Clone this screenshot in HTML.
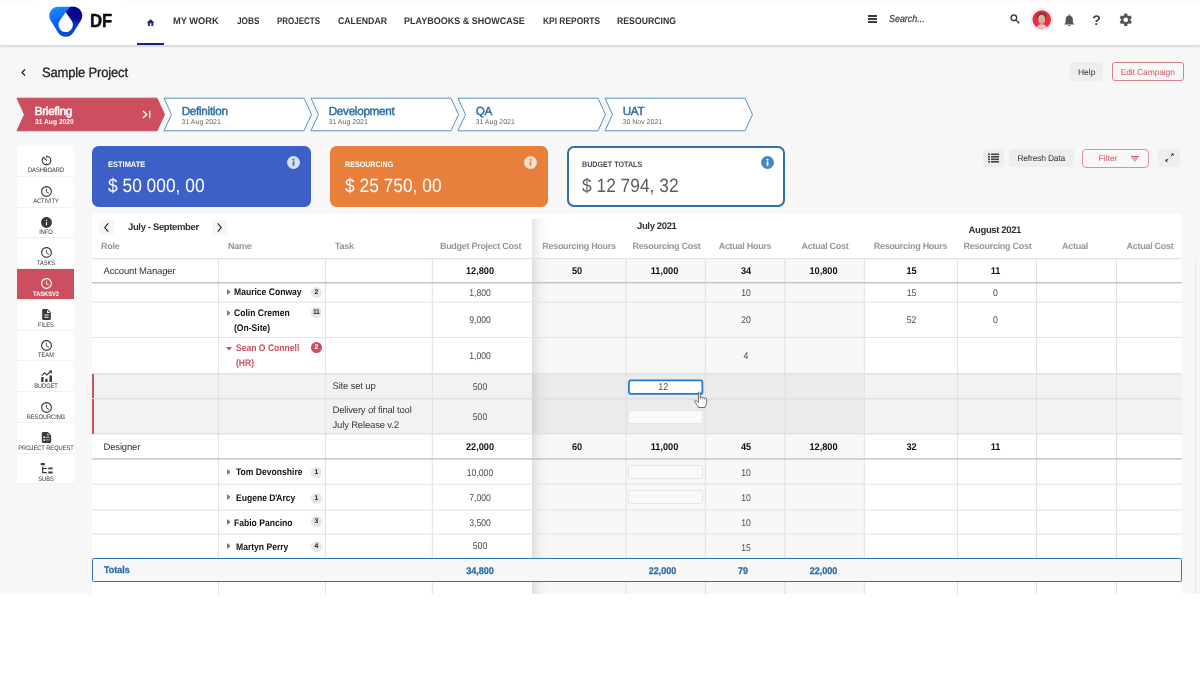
<!DOCTYPE html>
<html>
<head>
<meta charset="utf-8">
<title>Sample Project</title>
<style>
*{box-sizing:border-box;margin:0;padding:0}
html,body{width:1200px;height:697px;overflow:hidden;background:#fff;font-family:"Liberation Sans",sans-serif;color:#222;text-rendering:geometricPrecision}
.abs{position:absolute}
#page{position:absolute;left:0;top:0;width:1200px;height:594px;background:#f7f7f7;overflow:hidden;will-change:transform}
/* nav */
#nav{position:absolute;left:0;top:0;width:1200px;height:45px;background:#fff;box-shadow:0 1px 3px rgba(0,0,0,.2)}
.nv{position:absolute;top:15.900px;font-size:9.5px;font-weight:bold;letter-spacing:0;color:#333;white-space:nowrap;line-height:11px;transform-origin:0 50%}
/* title */
.btn{position:absolute;height:18px;border-radius:3px;font-size:8.500px;line-height:18px;text-align:center;color:#333;background:#eee;white-space:nowrap}
.btn.red{background:transparent;border:1.300px solid #db7f8a;color:#d05a69;line-height:16px}
/* stages */
.stage{position:absolute;top:97px;height:35px;width:149px}
.stage .t{position:absolute;left:18.700px;top:8.200px;font-size:11.700px;letter-spacing:-.28px;color:#2e6da4;line-height:13px;-webkit-text-stroke:.45px #2e6da4}
.stage .d{position:absolute;left:18.500px;top:22.100px;font-size:7px;color:#666;line-height:8px}
/* sidebar */
.sb{position:absolute;left:17px;width:57px;height:30.780px;background:#fff;border-bottom:1px solid #f1f1f1}
.sb span{position:absolute;left:-11.500px;width:80px;text-align:center;top:22px;font-size:6.500px;color:#333;line-height:7px;transform:scaleX(.875)}
.sb svg{position:absolute;left:23px;top:8.500px;width:13px;height:13px}
.sb.on{background:#cc4f5f}
.sb.on span{color:#fff;font-weight:bold}
/* cards */
.card{position:absolute;top:146px;height:60.500px;width:219px;border-radius:6.500px;color:#fff}
.card .l{position:absolute;left:16px;top:13.600px;font-size:8px;line-height:9px;font-weight:bold;letter-spacing:0;transform:scaleX(.935);transform-origin:0 50%;white-space:nowrap}
.card .v{position:absolute;left:15.500px;top:29.700px;font-size:19.200px;line-height:22px;letter-spacing:0;transform:scaleX(.905);transform-origin:0 50%;white-space:nowrap}
.card svg{position:absolute;right:11px;top:10px;width:13px;height:13px}
/* table */
#tbl{position:absolute;left:92px;top:214px;width:1090px;height:380px;background:#fff;border-radius:3px 3px 0 0;overflow:hidden}
.mt{font-size:9.5px;font-weight:bold;letter-spacing:-.36px;color:#303030;line-height:12px;white-space:nowrap}
.hd{font-size:9px;font-weight:bold;letter-spacing:-.28px;color:#969696;line-height:12px;white-space:nowrap}
.rg{font-size:9.5px;letter-spacing:-.17px;color:#333;line-height:12px;white-space:nowrap}
.nm{font-size:9.600px;font-weight:bold;letter-spacing:0;line-height:12px;white-space:nowrap;transform:scaleX(.893);transform-origin:0 50%}
.nb{font-size:9.700px;font-weight:bold;letter-spacing:0;color:#111;line-height:12px;white-space:nowrap;transform:scaleX(.95)}
.nr{font-size:9.700px;letter-spacing:0;color:#4a4a4a;line-height:12px;white-space:nowrap;transform:scaleX(.89)}
.tt{font-size:9.700px;font-weight:bold;letter-spacing:0;color:#2b69a6;line-height:12px;white-space:nowrap;transform:scaleX(.93);-webkit-text-stroke:.25px #2b69a6}
.bdg{width:11px;height:11px;border-radius:50%;font-size:6.800px;font-weight:bold;line-height:12.200px;text-align:center;letter-spacing:-.3px}
</style>
</head>
<body>
<div id="page">

<!-- NAV -->
<div id="nav">
  <div class="abs" style="left:0;top:0;width:38px;height:1px;background:#f7f9fb"></div><div class="abs" style="left:122px;top:0;width:1078px;height:1px;background:#f7f9fb"></div>
  <svg class="abs" style="left:48px;top:4px" width="36" height="36" viewBox="0 0 36 36">
    <defs>
      <linearGradient id="lg1" x1="0.15" y1="0" x2="0.55" y2="1"><stop offset="0" stop-color="#1f8fff"/><stop offset="0.45" stop-color="#0b63fb"/><stop offset="1" stop-color="#0a45d0"/></linearGradient>
      <linearGradient id="lg2" x1="0" y1="0" x2="0" y2="1"><stop offset="0" stop-color="#05058a"/><stop offset="0.45" stop-color="#07078f"/><stop offset="1" stop-color="#0a2ab8" stop-opacity="0"/></linearGradient>
    </defs>
    <path d="M10.300 2.700 H25.100 A9 9 0 0 1 32.780 16.400 L25.380 28.500 A9 9 0 0 1 10.020 28.500 L2.620 16.400 A9 9 0 0 1 10.300 2.700 Z" fill="url(#lg1)"/>
    <path d="M17.700 8.300 L21.800 3.200 Q22.300 2.700 23.300 2.700 H25.100 A9 9 0 0 1 32.780 16.400 L25.380 28.500 L17.700 28.500 Z" fill="url(#lg2)"/>
    <path d="M17.700 8.300 L23.500 16.600 A7.200 7.200 0 1 1 11.900 16.600 Z" fill="#fff"/>
  </svg>
  <div class="abs" style="left:90px;top:11.200px;font-size:19px;font-weight:bold;line-height:22px;color:#0b0b12;transform:scaleX(.88);transform-origin:0 50%;-webkit-text-stroke:.4px #0b0b12">DF</div>
  <svg class="abs" style="left:146px;top:17.500px" width="9.200" height="9.200" viewBox="0 0 24 24"><path d="M10 21v-7h4v7h5v-9h3L12 3 2 12h3v9z" fill="#1a237e"/></svg>
  <div class="abs" style="left:137px;top:43px;width:27px;height:2px;background:#1a237e"></div>
  <div class="nv" style="left:173px;transform:scaleX(0.978)">MY WORK</div>
  <div class="nv" style="left:237px;transform:scaleX(0.869)">JOBS</div>
  <div class="nv" style="left:277px;transform:scaleX(0.840)">PROJECTS</div>
  <div class="nv" style="left:337.5px;transform:scaleX(0.919)">CALENDAR</div>
  <div class="nv" style="left:404.25px;transform:scaleX(0.948)">PLAYBOOKS &amp; SHOWCASE</div>
  <div class="nv" style="left:542.5px;transform:scaleX(0.885)">KPI REPORTS</div>
  <div class="nv" style="left:617px;transform:scaleX(0.916)">RESOURCING</div>
  <!-- hamburger -->
  <div class="abs" style="left:868px;top:15px;width:8.500px;height:1.600px;background:#3c3c3c;box-shadow:0 3px 0 #3c3c3c,0 6px 0 #3c3c3c"></div>
  <div class="abs" style="left:888.500px;top:13.600px;font-size:10px;font-style:italic;color:#444;line-height:12px;transform:scaleX(.89);transform-origin:0 50%;-webkit-text-stroke:.25px #444">Search...</div>
  <svg class="abs" style="left:1009px;top:13.200px" width="12.300" height="12.300" viewBox="0 0 24 24" stroke="#333" stroke-width=".8"><path d="M15.5 14h-.79l-.28-.27A6.471 6.471 0 0 0 16 9.5 6.5 6.5 0 1 0 9.5 16c1.61 0 3.09-.59 4.23-1.57l.27.28v.79l5 4.99L20.49 19l-4.99-5zm-6 0C7.01 14 5 11.99 5 9.5S7.01 5 9.500 5 14 7.010 14 9.500 11.990 14 9.500 14z" fill="#333"/></svg>
  <!-- avatar -->
  <svg class="abs" style="left:1029px;top:7px" width="26" height="26" viewBox="0 0 26 26">
    <defs><clipPath id="avc"><circle cx="12.700" cy="12.500" r="9.300"/></clipPath></defs>
    <circle cx="12.700" cy="12.500" r="11" fill="#f7f7f7" stroke="#e1e1e1" stroke-width=".9"/>
    <circle cx="12.700" cy="12.500" r="9.300" fill="#ee2a48"/>
    <g clip-path="url(#avc)">
      <ellipse cx="12.700" cy="10.300" rx="4.700" ry="4.900" fill="#6a4033"/>
      <ellipse cx="12.700" cy="12.300" rx="3.500" ry="4.600" fill="#d9ae9b"/>
      <path d="M7.500 22.500 C7.500 18.500 10 17.300 12.700 17.300 C15.400 17.300 17.900 18.500 17.900 22.500 Z" fill="#e6c5b7"/>
    </g>
  </svg>
  <svg class="abs" style="left:1062px;top:12.500px" width="14.500" height="14.500" viewBox="0 0 24 24"><path d="M12 22c1.1 0 2-.9 2-2h-4c0 1.100.89 2 2 2zm6-6v-5c0-3.070-1.640-5.640-4.500-6.320V4c0-.83-.67-1.500-1.500-1.500s-1.500.670-1.500 1.500v.680C7.630 5.360 6 7.920 6 11v5l-2 2v1h16v-1l-2-2z" fill="#555"/></svg>
  <div class="abs" style="left:1092.300px;top:13px;font-size:14px;font-weight:bold;color:#444;line-height:14px">?</div>
  <svg class="abs" style="left:1118.300px;top:12.200px" width="15.500" height="15.500" viewBox="0 0 24 24"><path d="M19.140 12.940c.040-.300.060-.610.060-.940 0-.320-.020-.640-.070-.940l2.030-1.580a.490.490 0 0 0 .12-.610l-1.920-3.320a.488.488 0 0 0-.590-.220l-2.390.960c-.500-.380-1.030-.700-1.620-.940l-.360-2.540a.484.484 0 0 0-.480-.410h-3.840c-.240 0-.430.170-.470.410l-.360 2.540c-.590.240-1.130.570-1.620.940l-2.390-.960c-.220-.080-.470 0-.590.220L2.740 8.870c-.120.210-.080.470.12.610l2.030 1.580c-.050.300-.090.630-.090.940s.020.640.070.940l-2.030 1.580a.490.490 0 0 0-.12.610l1.920 3.320c.12.220.37.290.59.220l2.390-.96c.5.380 1.030.7 1.620.94l.36 2.540c.05.240.24.410.48.410h3.840c.24 0 .44-.17.470-.41l.36-2.540c.59-.24 1.130-.56 1.620-.94l2.390.96c.22.080.47 0 .59-.22l1.920-3.320c.12-.22.070-.47-.12-.61l-2.010-1.580zM12 15.600c-1.980 0-3.600-1.620-3.600-3.600s1.620-3.600 3.600-3.600 3.600 1.620 3.600 3.600-1.620 3.600-3.600 3.600z" fill="#555"/></svg>
</div>

<!-- TITLE BAR -->
<svg class="abs" style="left:20px;top:68px" width="7" height="9" viewBox="0 0 7 9"><path d="M5 1.500 L2 4.500 L5 7.500" fill="none" stroke="#222" stroke-width="1.200"/></svg>
<div class="abs" style="left:42.300px;top:65.200px;font-size:13.500px;line-height:16px;color:#222;letter-spacing:-.2px;transform:scaleX(.967);transform-origin:0 50%;-webkit-text-stroke:.3px #222">Sample Project</div>
<div class="btn" style="left:1070.300px;top:62.400px;width:32.700px;height:18.500px;line-height:20px">Help</div>
<div class="btn red" style="left:1112px;top:62px;width:71.500px;height:19.400px;line-height:18.600px;letter-spacing:-.12px">Edit Campaign</div>

<!-- STAGES -->
<div class="stage" style="left:16px"><svg class="abs" style="left:0;top:0" width="150" height="35" viewBox="0 0 150 35"><path d="M1 1.200 H141 L148.500 17.500 L141 33.800 H1 L8.500 17.500 Z" fill="#cb4f5e" stroke="#cb4f5e" stroke-width="1"/></svg><div class="t" style="color:#fff;-webkit-text-stroke:.5px #fff">Briefing</div><div class="d" style="color:#fff;font-weight:bold;transform:scaleX(.955);transform-origin:0 50%;white-space:nowrap">31 Aug 2020</div><svg class="abs" style="left:126px;top:13px" width="10" height="9" viewBox="0 0 10 9"><path d="M1 1 L4.800 4.500 L1 8" fill="none" stroke="#fff" stroke-width="1.200"/><path d="M7.800 0.800 V8.200" stroke="#fff" stroke-width="1.200"/></svg></div>
<div class="stage" style="left:163px"><svg class="abs" style="left:0;top:0" width="150" height="35" viewBox="0 0 150 35"><path d="M1 1.200 H141 L148.500 17.500 L141 33.800 H1 L8.500 17.500 Z" fill="#fff" stroke="#5a8fc6" stroke-width="1"/></svg><div class="t">Definition</div><div class="d">31 Aug 2021</div></div>
<div class="stage" style="left:310px"><svg class="abs" style="left:0;top:0" width="150" height="35" viewBox="0 0 150 35"><path d="M1 1.200 H141 L148.500 17.500 L141 33.800 H1 L8.500 17.500 Z" fill="#fff" stroke="#5a8fc6" stroke-width="1"/></svg><div class="t">Development</div><div class="d">31 Aug 2021</div></div>
<div class="stage" style="left:457px"><svg class="abs" style="left:0;top:0" width="150" height="35" viewBox="0 0 150 35"><path d="M1 1.200 H141 L148.500 17.500 L141 33.800 H1 L8.500 17.500 Z" fill="#fff" stroke="#5a8fc6" stroke-width="1"/></svg><div class="t">QA</div><div class="d">31 Aug 2021</div></div>
<div class="stage" style="left:604px"><svg class="abs" style="left:0;top:0" width="150" height="35" viewBox="0 0 150 35"><path d="M1 1.200 H141 L148.500 17.500 L141 33.800 H1 L8.500 17.500 Z" fill="#fff" stroke="#5a8fc6" stroke-width="1"/></svg><div class="t">UAT</div><div class="d">30 Nov 2021</div></div>
<!-- SIDEBAR -->
<div class="sb" style="top:146.00px"><svg style="top:8.00px" viewBox="0 0 24 24"><path fill="#3a3a3a" d="M11 17c0 .55.450 1 1 1s1-.45 1-1-.45-1-1-1-1 .45-1 1zm0-14v4h2V5.080c3.390.49 6 3.390 6 6.920 0 3.870-3.130 7-7 7s-7-3.130-7-7c0-1.680.59-3.220 1.580-4.420L12 13l1.410-1.410-6.800-6.800v.020C4.420 6.450 3 9.050 3 12c0 4.970 4.020 9 9 9 4.970 0 9-4.030 9-9s-4.030-9-9-9h-1z"/></svg><span style="top:21.30px">DASHBOARD</span></div>
<div class="sb" style="top:176.78px"><svg style="top:8.05px" viewBox="0 0 24 24"><path fill="#3a3a3a" d="M11.990 2C6.470 2 2 6.480 2 12s4.470 10 9.990 10C17.520 22 22 17.520 22 12S17.520 2 11.990 2zM12 20c-4.420 0-8-3.580-8-8s3.580-8 8-8 8 3.580 8 8-3.580 8-8 8zm.5-13H11v6l5.250 3.150.75-1.230-4.500-2.670z"/></svg><span style="top:21.38px">ACTIVITY</span></div>
<div class="sb" style="top:207.56px"><svg style="top:8.10px" viewBox="0 0 24 24"><path fill="#3a3a3a" d="M12 2C6.480 2 2 6.480 2 12s4.480 10 10 10 10-4.480 10-10S17.520 2 12 2zm1 15h-2v-6h2v6zm0-8h-2V7h2v2z"/></svg><span style="top:21.45px">INFO</span></div>
<div class="sb" style="top:238.34px"><svg style="top:8.15px" viewBox="0 0 24 24"><path fill="#3a3a3a" d="M11.990 2C6.470 2 2 6.480 2 12s4.470 10 9.990 10C17.520 22 22 17.520 22 12S17.520 2 11.990 2zM12 20c-4.420 0-8-3.580-8-8s3.580-8 8-8 8 3.580 8 8-3.580 8-8 8zm.5-13H11v6l5.250 3.150.75-1.230-4.500-2.670z"/></svg><span style="top:21.53px">TASKS</span></div>
<div class="sb on" style="top:269.12px"><svg style="top:8.20px" viewBox="0 0 24 24"><path fill="#fff" d="M11.990 2C6.470 2 2 6.480 2 12s4.470 10 9.990 10C17.520 22 22 17.520 22 12S17.520 2 11.990 2zM12 20c-4.420 0-8-3.580-8-8s3.580-8 8-8 8 3.580 8 8-3.580 8-8 8zm.5-13H11v6l5.250 3.150.75-1.230-4.500-2.670z"/></svg><span style="top:21.60px">TASKSV2</span></div>
<div class="sb" style="top:299.90px"><svg style="top:8.25px" viewBox="0 0 24 24"><path fill="#3a3a3a" d="M14 2H6c-1.100 0-1.990.9-1.990 2L4 20c0 1.100.89 2 1.990 2H18c1.100 0 2-.9 2-2V8l-6-6zm2 16H8v-2h8v2zm0-4H8v-2h8v2zm-3-5V3.500L18.500 9H13z"/></svg><span style="top:21.68px">FILES</span></div>
<div class="sb" style="top:330.68px"><svg style="top:8.30px" viewBox="0 0 24 24"><path fill="#3a3a3a" d="M11.990 2C6.470 2 2 6.480 2 12s4.470 10 9.990 10C17.520 22 22 17.520 22 12S17.520 2 11.990 2zM12 20c-4.420 0-8-3.580-8-8s3.580-8 8-8 8 3.580 8 8-3.580 8-8 8zm.5-13H11v6l5.250 3.150.75-1.230-4.500-2.670z"/></svg><span style="top:21.75px">TEAM</span></div>
<div class="sb" style="top:361.46px"><svg style="top:8.35px" viewBox="0 0 24 24"><path fill="#3a3a3a" d="M2.200 12.800h4.300v9.200H2.200zM9.800 16.100h4.200v5.900H9.800zM17.400 10h4.700v12h-4.700z"/><path fill="none" stroke="#3a3a3a" stroke-width="2.100" stroke-linejoin="round" d="M3.300 10.400 L8.100 5.400 L12.500 9.200 L19 3.200"/><path fill="#3a3a3a" d="M15.800 .8 H22.200 V7.200 Z"/></svg><span style="top:21.82px">BUDGET</span></div>
<div class="sb" style="top:392.24px"><svg style="top:8.40px" viewBox="0 0 24 24"><path fill="#3a3a3a" d="M11.990 2C6.470 2 2 6.480 2 12s4.470 10 9.990 10C17.520 22 22 17.520 22 12S17.520 2 11.990 2zM12 20c-4.420 0-8-3.580-8-8s3.580-8 8-8 8 3.580 8 8-3.580 8-8 8zm.5-13H11v6l5.250 3.150.75-1.230-4.500-2.670z"/></svg><span style="top:21.90px">RESOURCING</span></div>
<div class="sb" style="top:423.02px"><svg style="top:8.45px" viewBox="0 0 24 24"><path fill="#3a3a3a" d="M5.300 2 H14.500 L20.600 7.800 V20 a2 2 0 0 1 -2 2 H5.300 a2 2 0 0 1 -2 -2 V4 a2 2 0 0 1 2 -2 Z"/><g fill="#fff"><path d="M13.300 4.300 V8.500 H17.800 Z" opacity=".85"/><rect x="6" y="10" width="3.300" height="3" opacity=".9"/><rect x="10.500" y="10.800" width="7.200" height="1.500" opacity=".8"/><rect x="6" y="15.400" width="3.300" height="2.800" opacity=".85"/><rect x="10.500" y="15.700" width="7.300" height="1.500" opacity=".8"/></g></svg><span style="top:21.98px">PROJECT REQUEST</span></div>
<div class="sb" style="top:453.80px;height:30.6px"><svg style="top:8.50px" viewBox="0 0 24 24"><path fill="#3a3a3a" d="M1.300 1.700h7.600v4.200H1.300zM15.300 10h8v3.600h-8zM15.300 17.500h8v3.900h-8z"/><path fill="none" stroke="#3a3a3a" stroke-width="2.300" d="M5 8.300V19.600h7.800M5 12h7.800"/></svg><span style="top:22.05px">SUBS</span></div>
<!-- CARDS -->
<div class="card" style="left:92px;background:#3c60c8"><div class="l">ESTIMATE</div><div class="v">$ 50 000, 00</div><svg viewBox="0 0 26 26"><circle cx="13" cy="13" r="13" fill="rgba(255,255,255,.8)"/><rect x="11.300" y="11" width="3.400" height="8.500" fill="#3c60c8"/><circle cx="13" cy="7.300" r="2" fill="#3c60c8"/></svg></div>
<div class="card" style="left:329.600px;width:218.600px;background:#e8803c"><div class="l" style="left:15.500px;transform:scaleX(.89)">RESOURCING</div><div class="v">$ 25 750, 00</div><svg viewBox="0 0 26 26"><circle cx="13" cy="13" r="13" fill="rgba(255,255,255,.75)"/><rect x="11.300" y="11" width="3.400" height="8.500" fill="#e8803c"/><circle cx="13" cy="7.300" r="2" fill="#e8803c"/></svg></div>
<div class="card" style="left:566.500px;width:218.500px;background:#fff;border:2px solid #2f6fab;border-radius:7px"><div class="l" style="left:13.500px;top:11.600px;color:#4a4a4a;transform:scaleX(.895)">BUDGET TOTALS</div><div class="v" style="left:13.500px;top:27.700px;color:#5c5c5c">$ 12 794, 32</div><svg style="right:9px;top:8px" viewBox="0 0 26 26"><circle cx="13" cy="13" r="13" fill="#4a86c5"/><rect x="11.300" y="11" width="3.400" height="8.500" fill="#fff"/><circle cx="13" cy="7.300" r="2" fill="#fff"/></svg></div>
<!-- TOOLBAR -->
<div class="btn" style="left:982.500px;top:149px;width:21.500px"><svg class="abs" style="left:5.200px;top:4px" width="11" height="10" viewBox="0 0 11 10"><g fill="#444"><rect x="0" y="0.500" width="2" height="1.600"/><rect x="3" y="0.500" width="8" height="1.600"/><rect x="0" y="3" width="2" height="1.600"/><rect x="3" y="3" width="8" height="1.600"/><rect x="0" y="5.500" width="2" height="1.600"/><rect x="3" y="5.500" width="8" height="1.600"/><rect x="0" y="8" width="2" height="1.600"/><rect x="3" y="8" width="8" height="1.600"/></g></svg></div>
<div class="btn" style="left:1009px;top:149px;width:64.500px;letter-spacing:-.2px">Refresh Data</div>
<div class="btn red" style="left:1082px;top:149px;width:67.300px;height:18.600px;border:1.500px solid #e0909a;border-radius:4px;text-align:left;padding-left:15.600px;line-height:17px">Filter<svg class="abs" style="left:48.200px;top:5.600px" width="8" height="6" viewBox="0 0 8 6"><g fill="#d05a69"><rect x="0" y="0" width="7.800" height="1.400"/><rect x="1.200" y="2.300" width="5.400" height="1.100" opacity=".85"/><rect x="2.700" y="4.200" width="2.500" height="1" opacity=".75"/></g></svg></div>
<div class="btn" style="left:1158.200px;top:149px;width:21.500px"><svg class="abs" style="left:6.800px;top:4.100px" width="9" height="9" viewBox="0 0 9 9"><g fill="#111"><path d="M5.900 .5 H8.500 V3.100 Z"/><path d="M.5 5.900 V8.500 H3.100 Z"/></g><path d="M7.600 1.400 L5.700 3.300 M1.400 7.600 L3.300 5.700" stroke="#111" stroke-width=".9"/></svg></div>
<!-- TABLE -->
<div id="tbl">
<div class="abs" style="left:440px;top:45px;width:332px;height:335px;background:#f8f8f8"></div>
<div class="abs" style="left:0;top:160.3px;width:1090px;height:59.0px;background:#f2f2f2"></div>
<div class="abs" style="left:440px;top:160px;width:332px;height:60px;background:#ebebeb"></div>
<div class="abs" style="left:440px;top:5px;width:16px;height:375px;background:linear-gradient(to right,rgba(0,0,0,.10),rgba(0,0,0,.03) 45%,rgba(0,0,0,0))"></div>
<svg class="abs" style="left:0;top:0" width="1090" height="380" viewBox="0 0 1090 380"><rect x="125.90" y="45" width="1.100" height="335" fill="#e2e2e2"/><rect x="232.85" y="45" width="1.100" height="335" fill="#e2e2e2"/><rect x="339.75" y="45" width="1.100" height="335" fill="#e2e2e2"/><rect x="533.65" y="45" width="1.100" height="335" fill="#e2e2e2"/><rect x="612.75" y="45" width="1.100" height="335" fill="#e2e2e2"/><rect x="692.20" y="45" width="1.100" height="335" fill="#e2e2e2"/><rect x="771.75" y="45" width="1.100" height="335" fill="#e2e2e2"/><rect x="864.95" y="45" width="1.100" height="335" fill="#e2e2e2"/><rect x="943.95" y="45" width="1.100" height="335" fill="#e2e2e2"/><rect x="1023.95" y="45" width="1.100" height="335" fill="#e2e2e2"/><rect x="0" y="43.95" width="1090" height="1.3" fill="#e3e3e3"/><rect x="0" y="68.00" width="1090" height="1.4" fill="#c2c2c2"/><rect x="0" y="87.65" width="1090" height="1.1" fill="#e4e4e4"/><rect x="0" y="122.95" width="1090" height="1.1" fill="#e4e4e4"/><rect x="0" y="159.20" width="1090" height="1.2" fill="#dcdcdc"/><rect x="0" y="184.20" width="1090" height="1.2" fill="#dcdcdc"/><rect x="0" y="219.20" width="1090" height="1.2" fill="#dcdcdc"/><rect x="0" y="244.20" width="1090" height="1.4" fill="#c2c2c2"/><rect x="0" y="269.65" width="1090" height="1.1" fill="#e4e4e4"/><rect x="0" y="295.45" width="1090" height="1.1" fill="#e4e4e4"/><rect x="0" y="319.45" width="1090" height="1.1" fill="#e4e4e4"/></svg>
<div class="abs" style="left:0;top:160px;width:2px;height:24px;background:#cb4f5e"></div>
<div class="abs" style="left:0;top:185px;width:2px;height:35px;background:#cb4f5e"></div>
<div class="abs" style="left:0;top:344.4px;width:1090px;height:23.300000000000068px;background:#f7f7f7;border:1.900px solid #2f6fab;border-radius:1.500px"></div>
<div class="abs" style="left:7px;top:6px;width:15px;height:15px;background:#f6f6f6;border-radius:3px"><svg class="abs" style="left:4px;top:3px" width="7" height="9" viewBox="0 0 7 9"><path d="M5.200 0.400 L1.800 4.500 L5.200 8.600" fill="none" stroke="#222" stroke-width="1.150"/></svg></div>
<div class="abs" style="left:120px;top:6px;width:15px;height:15px;background:#f6f6f6;border-radius:3px"><svg class="abs" style="left:4px;top:3px" width="7" height="9" viewBox="0 0 7 9"><path d="M1.800 0.400 L5.200 4.500 L1.800 8.600" fill="none" stroke="#222" stroke-width="1.150"/></svg></div>
<div class="abs mt" style="left:36px;top:7.800000000000011px">July - September</div>
<div class="abs mt" style="left:545px;top:7.199999999999989px">July 2021</div>
<div class="abs mt" style="left:876.5px;top:10.800000000000011px">August 2021</div>
<div class="abs hd" style="left:9px;top:26.19999999999999px">Role</div>
<div class="abs hd" style="left:136px;top:26.19999999999999px">Name</div>
<div class="abs hd" style="left:243px;top:26.19999999999999px">Task</div>
<div class="abs hd" style="left:340px;top:26.19999999999999px;width:100px;text-align:center;margin-left:-1.5px">Budget Project Cost</div>
<div class="abs hd" style="left:440px;top:26.19999999999999px;width:94px;text-align:center;margin-left:0px">Resourcing Hours</div>
<div class="abs hd" style="left:534px;top:26.19999999999999px;width:79px;text-align:center;margin-left:1px">Resourcing Cost</div>
<div class="abs hd" style="left:613px;top:26.19999999999999px;width:80px;text-align:center;margin-left:0px">Actual Hours</div>
<div class="abs hd" style="left:693px;top:26.19999999999999px;width:79px;text-align:center;margin-left:0.5px">Actual Cost</div>
<div class="abs hd" style="left:772px;top:26.19999999999999px;width:93px;text-align:center;margin-left:0px">Resourcing Hours</div>
<div class="abs hd" style="left:865px;top:26.19999999999999px;width:79px;text-align:center;margin-left:1px">Resourcing Cost</div>
<div class="abs hd" style="left:944px;top:26.19999999999999px;width:80px;text-align:center;margin-left:-1px">Actual</div>
<div class="abs hd" style="left:1024px;top:26.19999999999999px;width:66px;text-align:center;margin-left:1px">Actual Cost</div>
<div class="abs rg" style="left:11.5px;top:52.300000000000026px">Account Manager</div>
<div class="abs nb" style="left:338px;top:51.800000000000026px;width:100px;text-align:center">12,800</div>
<div class="abs nb" style="left:438.25px;top:51.800000000000026px;width:94px;text-align:center">50</div>
<div class="abs nb" style="left:533px;top:51.800000000000026px;width:79px;text-align:center">11,000</div>
<div class="abs nb" style="left:613.75px;top:51.800000000000026px;width:80px;text-align:center">34</div>
<div class="abs nb" style="left:691.5px;top:51.800000000000026px;width:79px;text-align:center">10,800</div>
<div class="abs nb" style="left:772.5px;top:51.800000000000026px;width:93px;text-align:center">15</div>
<div class="abs nb" style="left:864px;top:51.800000000000026px;width:79px;text-align:center">11</div>
<div class="abs rg" style="left:11.5px;top:228.3px">Designer</div>
<div class="abs nb" style="left:338px;top:227.8px;width:100px;text-align:center">22,000</div>
<div class="abs nb" style="left:438.25px;top:227.8px;width:94px;text-align:center">60</div>
<div class="abs nb" style="left:533px;top:227.8px;width:79px;text-align:center">11,000</div>
<div class="abs nb" style="left:613.75px;top:227.8px;width:80px;text-align:center">45</div>
<div class="abs nb" style="left:691.5px;top:227.8px;width:79px;text-align:center">12,800</div>
<div class="abs nb" style="left:772.5px;top:227.8px;width:93px;text-align:center">32</div>
<div class="abs nb" style="left:864px;top:227.8px;width:79px;text-align:center">11</div>
<svg class="abs" style="left:134.9px;top:74.8px" width="4" height="6" viewBox="0 0 4 6"><path d="M0 0 V6 L3.600 3 Z" fill="#777"/></svg>
<div class="abs nm" style="left:142.0px;top:73.1px;color:#111">Maurice Conway</div>
<div class="abs bdg" style="left:218.7px;top:72.5px;background:#e6e6e6;color:#222">2</div>
<div class="abs nr" style="left:338px;top:74.2px;width:100px;text-align:center">1,800</div>
<div class="abs nr" style="left:613.75px;top:74.2px;width:80px;text-align:center">10</div>
<div class="abs nr" style="left:772.5px;top:74.2px;width:93px;text-align:center">15</div>
<div class="abs nr" style="left:864px;top:74.2px;width:79px;text-align:center">0</div>
<svg class="abs" style="left:134.9px;top:95.49999999999999px" width="4" height="6" viewBox="0 0 4 6"><path d="M0 0 V6 L3.600 3 Z" fill="#777"/></svg>
<div class="abs nm" style="left:142.0px;top:93.79999999999998px;color:#111">Colin Cremen</div>
<div class="abs nm" style="left:142.0px;top:108.6px;color:#111">(On-Site)</div>
<div class="abs bdg" style="left:218.7px;top:93.19999999999999px;background:#e6e6e6;color:#222">11</div>
<div class="abs nr" style="left:338px;top:101.2px;width:100px;text-align:center">9,000</div>
<div class="abs nr" style="left:613.75px;top:101.2px;width:80px;text-align:center">20</div>
<div class="abs nr" style="left:772.5px;top:101.2px;width:93px;text-align:center">52</div>
<div class="abs nr" style="left:864px;top:101.2px;width:79px;text-align:center">0</div>
<svg class="abs" style="left:133.5px;top:132.5px" width="6" height="4" viewBox="0 0 6 4"><path d="M0 0 H6 L3 3.600 Z" fill="#cb4f5e"/></svg>
<div class="abs nm" style="left:143.9px;top:129.1px;color:#cb4f5e">Sean O Connell</div>
<div class="abs nm" style="left:143.9px;top:143.9px;color:#cb4f5e">(HR)</div>
<div class="abs bdg" style="left:218.7px;top:128.0px;background:#cb4f5e;color:#fff">2</div>
<div class="abs nr" style="left:338px;top:137.2px;width:100px;text-align:center">1,000</div>
<div class="abs nr" style="left:613.75px;top:137.2px;width:80px;text-align:center">4</div>
<svg class="abs" style="left:134.9px;top:254.60000000000002px" width="4" height="6" viewBox="0 0 4 6"><path d="M0 0 V6 L3.600 3 Z" fill="#777"/></svg>
<div class="abs nm" style="left:144.0px;top:252.9px;color:#111">Tom Devonshire</div>
<div class="abs bdg" style="left:218.7px;top:253.0px;background:#e6e6e6;color:#222">1</div>
<div class="abs nr" style="left:338px;top:254.2px;width:100px;text-align:center">10,000</div>
<div class="abs nr" style="left:613.75px;top:254.2px;width:80px;text-align:center">10</div>
<svg class="abs" style="left:134.9px;top:280.3px" width="4" height="6" viewBox="0 0 4 6"><path d="M0 0 V6 L3.600 3 Z" fill="#777"/></svg>
<div class="abs nm" style="left:144.0px;top:278.6px;color:#111">Eugene D<span style="margin:0 -1.2px 0 -.6px">&#8217;</span>Arcy</div>
<div class="abs bdg" style="left:218.7px;top:278.5px;background:#e6e6e6;color:#222">1</div>
<div class="abs nr" style="left:338px;top:279.2px;width:100px;text-align:center">7,000</div>
<div class="abs nr" style="left:613.75px;top:279.2px;width:80px;text-align:center">10</div>
<svg class="abs" style="left:134.9px;top:305.3px" width="4" height="6" viewBox="0 0 4 6"><path d="M0 0 V6 L3.600 3 Z" fill="#777"/></svg>
<div class="abs nm" style="left:142.0px;top:303.6px;color:#111">Fabio Pancino</div>
<div class="abs bdg" style="left:218.7px;top:302.29999999999995px;background:#e6e6e6;color:#222">3</div>
<div class="abs nr" style="left:338px;top:304.2px;width:100px;text-align:center">3,500</div>
<div class="abs nr" style="left:613.75px;top:304.2px;width:80px;text-align:center">10</div>
<svg class="abs" style="left:134.9px;top:329.3px" width="4" height="6" viewBox="0 0 4 6"><path d="M0 0 V6 L3.600 3 Z" fill="#777"/></svg>
<div class="abs nm" style="left:144.0px;top:327.6px;color:#111">Martyn Perry</div>
<div class="abs bdg" style="left:218.7px;top:326.5px;background:#e6e6e6;color:#222">4</div>
<div class="abs nr" style="left:338px;top:327.2px;width:100px;text-align:center">500</div>
<div class="abs nr" style="left:613.75px;top:329.2px;width:80px;text-align:center">15</div>
<div class="abs rg" style="left:240.5px;top:166.5px;color:#3a3a3a">Site set up</div>
<div class="abs nr" style="left:338px;top:168.0px;width:100px;text-align:center">500</div>
<div class="abs rg" style="left:240.5px;top:191px;color:#3a3a3a">Delivery of final tool</div>
<div class="abs rg" style="left:240.5px;top:206px;color:#3a3a3a">July Release v.2</div>
<div class="abs nr" style="left:338px;top:198.2px;width:100px;text-align:center">500</div>
<svg class="abs" style="left:534px;top:164px" width="80" height="19" viewBox="0 0 80 19"><rect x="2.900" y="2.400" width="73.500" height="13.500" rx="2" fill="#fff" stroke="#2878d6" stroke-width="1.800"/></svg><div class="abs nr" style="left:537.2px;top:167.60000000000002px;width:68.500px;text-align:center;font-size:10px">12</div>
<div class="abs" style="left:536px;top:196.2px;width:75.300px;height:14px;background:#fafafa;border:1px solid #e6e6e6;border-radius:2px"></div>
<div class="abs" style="left:536px;top:251.2px;width:75.300px;height:14px;background:#fafafa;border:1px solid #e6e6e6;border-radius:2px"></div>
<div class="abs" style="left:536px;top:276.2px;width:75.300px;height:14px;background:#fafafa;border:1px solid #e6e6e6;border-radius:2px"></div>
<div class="abs tt" style="left:11.5px;top:351.0px;transform-origin:0 50%">Totals</div>
<div class="abs tt" style="left:338px;top:352.2px;width:100px;text-align:center">34,800</div>
<div class="abs tt" style="left:530.5px;top:352.2px;width:79px;text-align:center">22,000</div>
<div class="abs tt" style="left:611.25px;top:352.2px;width:80px;text-align:center">79</div>
<div class="abs tt" style="left:691.5px;top:352.2px;width:79px;text-align:center">22,000</div>
</div>
<svg class="abs" style="left:694.200px;top:391.400px" width="14" height="18" viewBox="0 0 14 18"><path d="M4.400 1.600 C4.400 .8 6.200 .8 6.200 1.600 V6.800 L6.700 6.800 C6.700 6 8.300 6 8.300 6.800 L8.700 7 C8.700 6.300 10.300 6.300 10.300 7 L10.700 7.400 C10.700 6.800 12.600 6.800 12.600 7.600 V11 C12.600 13 11.300 15 11 16.500 H4.400 C4 15 2 12.500 .8 10.600 C.2 9.600 1.600 8.800 2.400 9.800 L4.400 11.600 Z" fill="#fff" stroke="#555" stroke-width=".85" stroke-linejoin="round"/><path d="M6.450 6.800 V8.600 M8.500 7 V8.600 M10.500 7.300 V8.800" stroke="#666" stroke-width=".55"/></svg>
<div class="abs" style="left:1195px;top:259px;width:1.300px;height:335px;background:#e9e9e9"></div>

</div>
</body>
</html>
